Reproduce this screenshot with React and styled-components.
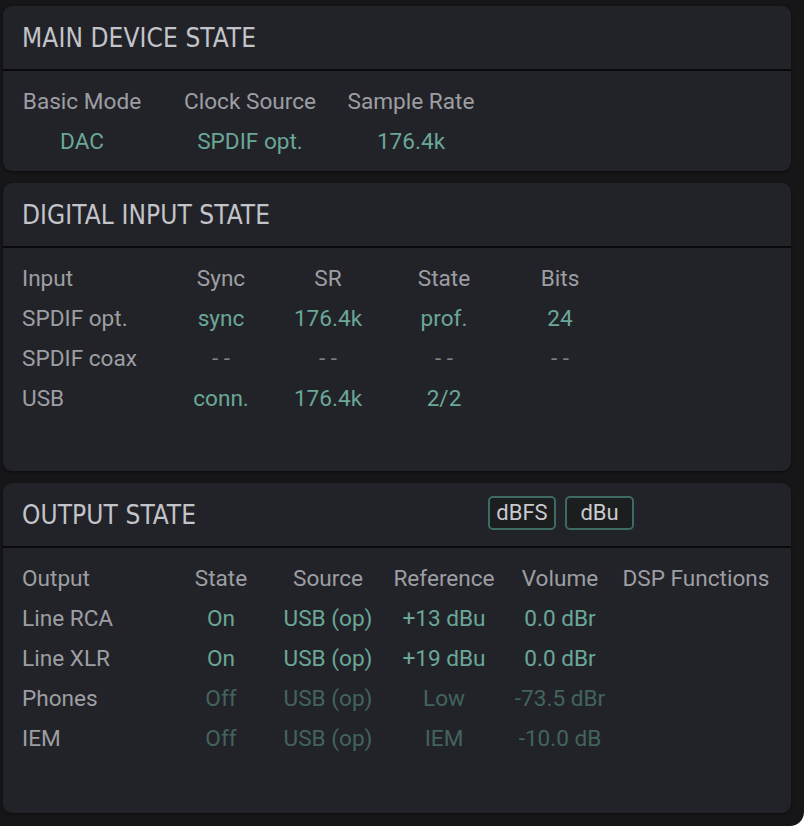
import React from "react";
import styled, { createGlobalStyle } from "styled-components";

const Global = createGlobalStyle`
  html, body { margin: 0; padding: 0; background: #ffffff; }
  body { font-family: Roboto, "Liberation Sans", sans-serif; }
`;

const Screen = styled.div`
  width: 804px;
  height: 826px;
  box-sizing: border-box;
  background: #161619;
  border-bottom-right-radius: 14px;
  padding: 6px 13px 0 3px;
  display: flex;
  flex-direction: column;
  gap: 12px;
  overflow: hidden;
`;

const Panel = styled.section`
  background: #222328;
  border-radius: 9px;
  box-shadow: 0 1px 3px rgba(0, 0, 0, 0.5);
  display: flex;
  flex-direction: column;
`;

const Header = styled.div`
  height: 65px;
  box-sizing: border-box;
  padding: 0 19px;
  display: flex;
  align-items: center;
  border-bottom: 2px solid #09090b;
`;

const Title = styled.h2`
  margin: 0;
  flex: ${(p) => (p.$fixed ? `0 0 ${p.$fixed}px` : "0 0 auto")};
  font-family: "Liberation Sans Narrow", "DejaVu Sans Condensed", "Roboto", sans-serif;
  font-weight: 400;
  font-size: 26px;
  color: #c3c4c9;
  letter-spacing: 0.1px;
  line-height: 1;
`;

const UnitGroup = styled.div`
  display: flex;
  gap: 9px;
  margin-top: -3px;
`;

const UnitButton = styled.button`
  width: ${(p) => p.$w}px;
  height: 34px;
  box-sizing: border-box;
  border: 2px solid #3d6a62;
  border-radius: 5px;
  background: #1b1d1f;
  color: #c9cacd;
  font-family: Roboto, "Liberation Sans", sans-serif;
  font-size: 22px;
  padding: 0;
  line-height: 30px;
  text-align: center;
`;

const Body = styled.div`
  padding: 11px 19px ${(p) => p.$bottom}px;
  display: grid;
  grid-template-columns: ${(p) => p.$cols};
  grid-auto-rows: 40px;
`;

const Cell = styled.div`
  font-size: 22.6px;
  line-height: 40px;
  white-space: nowrap;
  justify-self: ${(p) => (p.$left ? "start" : "center")};
  color: ${(p) =>
    p.$tone === "label"
      ? "#9d9ea3"
      : p.$tone === "dim"
      ? "#43645c"
      : p.$tone === "none"
      ? "#7e7f85"
      : "#6aa797"};
`;

const TABLE_COLS = "146px 106px 108px 124px 108px 164px";

const mainHead = ["Basic Mode", "Clock Source", "Sample Rate"];
const mainVals = ["DAC", "SPDIF opt.", "176.4k"];

const inputHead = ["Input", "Sync", "SR", "State", "Bits", ""];
const inputRows = [
  { name: "SPDIF opt.", vals: ["sync", "176.4k", "prof.", "24", ""], tone: "on" },
  { name: "SPDIF coax", vals: ["- -", "- -", "- -", "- -", ""], tone: "none" },
  { name: "USB", vals: ["conn.", "176.4k", "2/2", "", ""], tone: "on" },
];

const outHead = ["Output", "State", "Source", "Reference", "Volume", "DSP Functions"];
const outRows = [
  { name: "Line RCA", vals: ["On", "USB (op)", "+13 dBu", "0.0 dBr", ""], tone: "on" },
  { name: "Line XLR", vals: ["On", "USB (op)", "+19 dBu", "0.0 dBr", ""], tone: "on" },
  { name: "Phones", vals: ["Off", "USB (op)", "Low", "-73.5 dBr", ""], tone: "dim" },
  { name: "IEM", vals: ["Off", "USB (op)", "IEM", "-10.0 dB", ""], tone: "dim" },
];

function TableRows({ head, rows }) {
  return (
    <>
      {head.map((h, i) => (
        <Cell key={"h" + i} $tone="label" $left={i === 0}>
          {h}
        </Cell>
      ))}
      {rows.map((r) => (
        <React.Fragment key={r.name}>
          <Cell $tone="label" $left>
            {r.name}
          </Cell>
          {r.vals.map((v, i) => (
            <Cell key={i} $tone={r.tone}>
              {v}
            </Cell>
          ))}
        </React.Fragment>
      ))}
    </>
  );
}

export default function App() {
  return (
    <>
      <Global />
      <Screen>
        <Panel>
          <Header>
            <Title>MAIN DEVICE STATE</Title>
          </Header>
          <Body $cols="120px 216px 106px" $bottom={9}>
            {mainHead.map((h) => (
              <Cell key={h} $tone="label">
                {h}
              </Cell>
            ))}
            {mainVals.map((v) => (
              <Cell key={v} $tone="on">
                {v}
              </Cell>
            ))}
          </Body>
        </Panel>

        <Panel>
          <Header>
            <Title>DIGITAL INPUT STATE</Title>
          </Header>
          <Body $cols={TABLE_COLS} $bottom={52}>
            <TableRows head={inputHead} rows={inputRows} />
          </Body>
        </Panel>

        <Panel>
          <Header>
            <Title $fixed={466}>OUTPUT STATE</Title>
            <UnitGroup>
              <UnitButton $w={68}>dBFS</UnitButton>
              <UnitButton $w={69}>dBu</UnitButton>
            </UnitGroup>
          </Header>
          <Body $cols={TABLE_COLS} $bottom={54}>
            <TableRows head={outHead} rows={outRows} />
          </Body>
        </Panel>
      </Screen>
    </>
  );
}
